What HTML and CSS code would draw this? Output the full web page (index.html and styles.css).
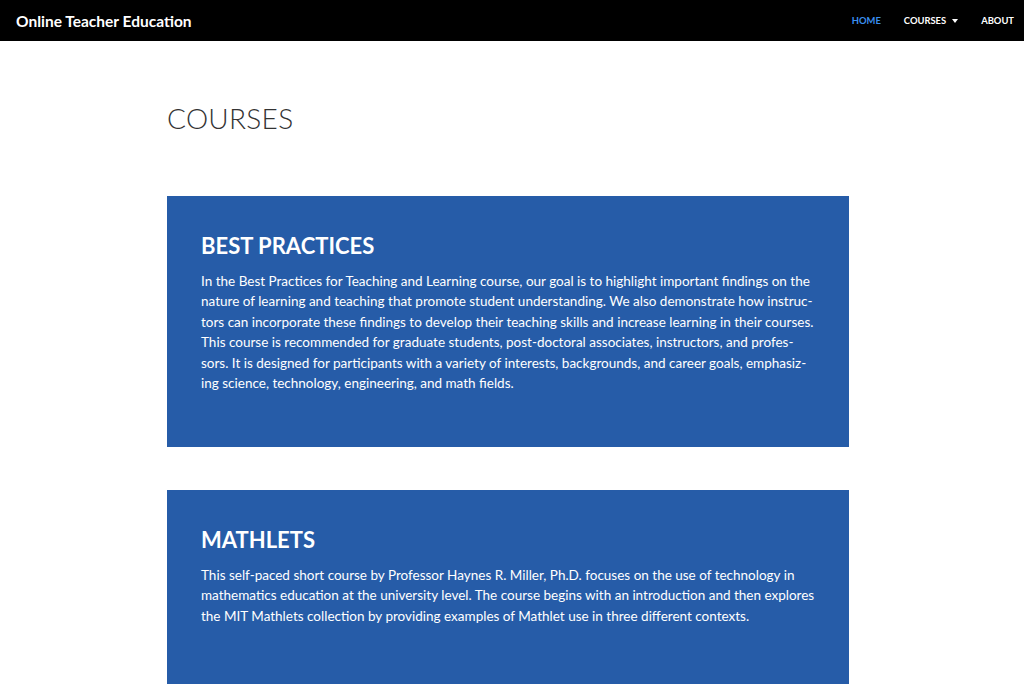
FILE: index.html
```html
<!DOCTYPE html>
<html lang="en">
<head>
<meta charset="utf-8">
<title>Online Teacher Education</title>
<link rel="stylesheet" href="styles.css">
</head>
<body>
<header class="navbar">
  <a class="brand" href="#">Online Teacher Education</a>
  <nav class="nav">
    <a class="nav-link active" href="#">HOME</a>
    <a class="nav-link" href="#">COURSES <span class="caret"></span></a>
    <a class="nav-link" href="#">ABOUT</a>
  </nav>
</header>
<main class="container">
  <h1 class="page-title">COURSES</h1>
  <section class="card">
    <h2 class="card-title">BEST PRACTICES</h2>
    <p class="card-text">In the Best Practices for Teaching and Learning course, our goal is to highlight important findings on the nature of learning and teaching that promote student understanding. We also demonstrate how instruc&shy;tors can incorporate these findings to develop their teaching skills and increase learning in their courses. This course is recommended for graduate students, post-doctoral associates, instructors, and profes&shy;sors. It is designed for participants with a variety of interests, backgrounds, and career goals, emphasiz&shy;ing science, technology, engineering, and math fields.</p>
  </section>
  <section class="card">
    <h2 class="card-title">MATHLETS</h2>
    <p class="card-text">This self-paced short course by Professor Haynes R. Miller, Ph.D. focuses on the use of technology in mathematics education at the university level. The course begins with an introduction and then explores the MIT Mathlets collection by providing examples of Mathlet use in three different contexts.</p>
  </section>
</main>
</body>
</html>
```
FILE: styles.css
```css
* { box-sizing: border-box; }
html, body { margin: 0; padding: 0; }
body {
  font-family: Lato, "Open Sans", "Liberation Sans", sans-serif;
  background: #fff;
  color: #333;
}
.navbar {
  background: #000;
  height: 41px;
  display: flex;
  align-items: center;
  justify-content: space-between;
  padding: 0 10px 0 16px;
}
.brand {
  color: #fff;
  text-decoration: none;
  font-weight: 700;
  font-size: 15.5px;
}
.nav { display: flex; align-items: center; }
.nav-link {
  color: #fff;
  text-decoration: none;
  font-size: 9.4px;
  font-weight: 700;
  padding: 0 11.5px;
  display: flex;
  align-items: center;
}
.nav-link:last-child { padding-right: 0; }
.nav-link.active { color: #3b8ff0; }
.caret {
  display: inline-block;
  width: 0; height: 0;
  margin-left: 6px;
  border-left: 3.5px solid transparent;
  border-right: 3.5px solid transparent;
  border-top: 4px solid #fff;
}
.container {
  width: 682px;
  margin-left: calc(50% - 345px);
  padding-top: 58px;
  padding-bottom: 40px;
}
.page-title {
  margin: 0 0 59px;
  font-size: 28px;
  font-weight: 300;
  color: #333;
  line-height: 38px;
  letter-spacing: 0.3px;
}
.card {
  background: #265ca8;
  color: #fff;
  padding: 35px 34px 40px;
  margin-bottom: 43px;
  min-height: 251px;
}
.card-title {
  margin: 0 0 10px;
  font-size: 22px;
  font-weight: 700;
  line-height: 30px;
}
.card-text {
  margin: 0;
  font-size: 13.5px;
  line-height: 20.4px;
  hyphens: manual;
}
```
